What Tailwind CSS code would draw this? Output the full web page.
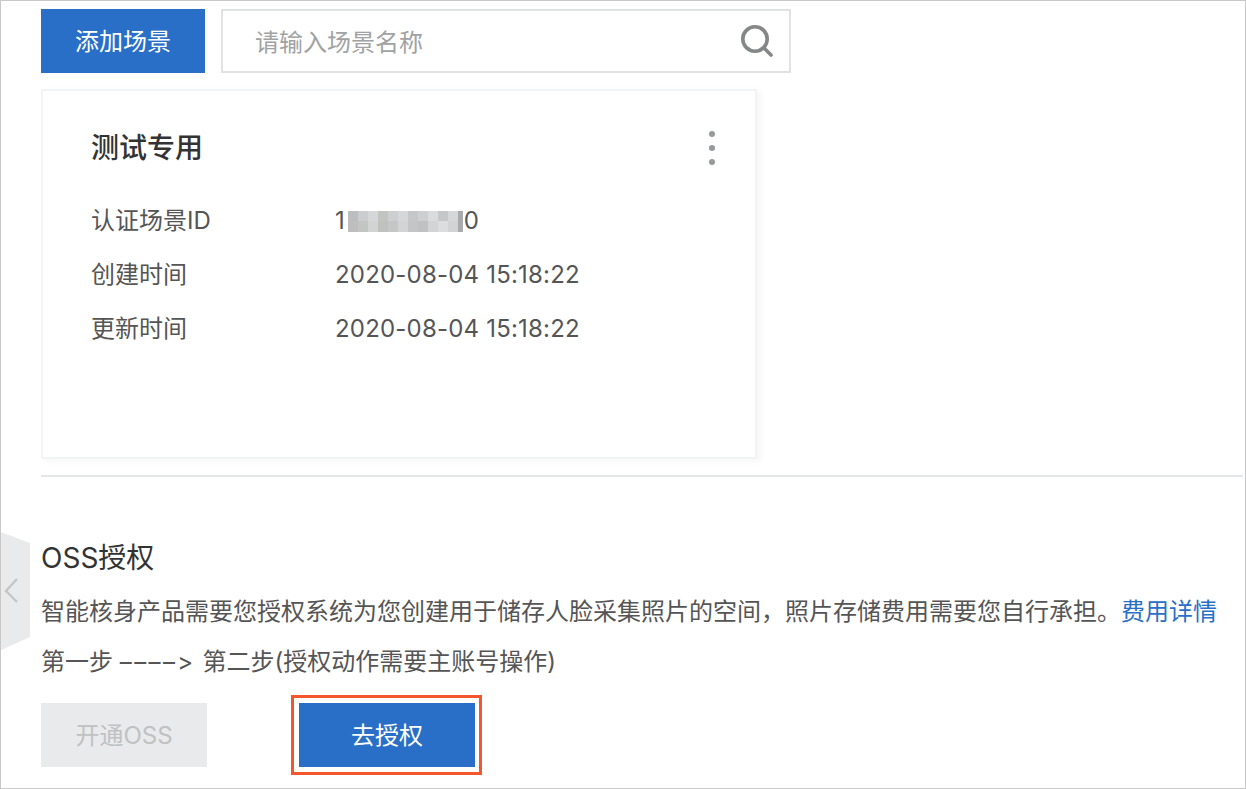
<!DOCTYPE html>
<html lang="zh-CN">
<head>
<meta charset="utf-8">
<title>OSS授权</title>
<script src="https://cdn.jsdelivr.net/npm/@tailwindcss/browser@4"></script>
</head>
<body class="bg-white">
<div class="relative h-[789px] w-[1246px] overflow-hidden border border-[#c8c8c8] bg-white pl-10 pr-[2px] pt-2 font-['Inter','Noto_Sans_CJK_SC',sans-serif] text-[24px] text-[#555] [font-feature-settings:'calt'_0]">

  <!-- Toolbar -->
  <div class="flex gap-4">
    <button class="h-16 w-[164px] bg-[#2a6fc7] pt-[1px] text-white">添加场景</button>
    <div class="flex h-16 w-[570px] items-center justify-between border-2 border-[#e0e2e3] pl-[32px] pr-[16px]">
      <span class="pt-[4px] text-[#a0a2a4]">请输入场景名称</span>
      <svg class="h-8 w-8" viewBox="0 0 32 32" fill="none" stroke="#848687" stroke-width="3.6" stroke-linecap="round"><circle cx="14" cy="14" r="12.2"/><path d="M23 23l7 7"/></svg>
    </div>
  </div>

  <!-- Scene card -->
  <div class="mt-4 h-[370px] w-[716px] border-2 border-[#f2f3f4] pl-[48px] pr-[40px] pt-[37px] shadow-[4px_2px_6px_rgba(0,0,0,0.04)]">
    <div class="flex items-center justify-between">
      <h3 class="text-[28px] leading-[40px] font-medium text-[#333]">测试专用</h3>
      <div class="flex flex-col gap-2">
        <span class="h-[6px] w-[6px] rounded-full bg-[#98999b]"></span>
        <span class="h-[6px] w-[6px] rounded-full bg-[#98999b]"></span>
        <span class="h-[6px] w-[6px] rounded-full bg-[#98999b]"></span>
      </div>
    </div>
    <dl class="mt-[35px] grid grid-cols-[244px_1fr] gap-y-[18px] leading-[36px]">
      <dt>认证场景ID</dt>
      <dd class="flex items-center">
        <span>1</span>
        <span class="ml-[3px] mr-[1px] grid h-[21px] w-[115px] grid-cols-[repeat(11,10px)_5px] grid-rows-2">
          <i class="bg-[#bcbdbe]"></i><i class="bg-[#cbcccd]"></i><i class="bg-[#d6d7d8]"></i><i class="bg-[#c2c4c2]"></i><i class="bg-[#cdcecf]"></i><i class="bg-[#d6d7d9]"></i><i class="bg-[#c6c7c9]"></i><i class="bg-[#cecfd1]"></i><i class="bg-[#dadbdc]"></i><i class="bg-[#c6c7c9]"></i><i class="bg-[#d6d7d8]"></i><i class="bg-[#a9aaab]"></i>
          <i class="bg-[#bdbebd]"></i><i class="bg-[#c3c5c3]"></i><i class="bg-[#d2d3d3]"></i><i class="bg-[#bfc1bf]"></i><i class="bg-[#c5c7c6]"></i><i class="bg-[#d3d4d5]"></i><i class="bg-[#c4c5c7]"></i><i class="bg-[#c0c1c3]"></i><i class="bg-[#d3d4d5]"></i><i class="bg-[#dcdddf]"></i><i class="bg-[#d2d3d4]"></i><i class="bg-[#a9aaab]"></i>
        </span>
        <span>0</span>
      </dd>
      <dt>创建时间</dt>
      <dd class="tracking-[0.2px]">2020-08-04 15:18:22</dd>
      <dt>更新时间</dt>
      <dd class="tracking-[0.2px]">2020-08-04 15:18:22</dd>
    </dl>
  </div>

  <hr class="mt-[16px] border-t-2 border-[#e5e6e7]">

  <!-- OSS authorization -->
  <section class="pt-[62px]">
    <h2 class="text-[28px] leading-[38px] text-[#333]">OSS授权</h2>
    <p class="mt-[18px] leading-[34px] whitespace-nowrap">智能核身产品需要您授权系统为您创建用于储存人脸采集照片的空间，照片存储费用需要您自行承担。<a href="#" class="text-[#2a6fc7]">费用详情</a></p>
    <p class="mt-[16px] leading-[34px]">第一步 <span class="tracking-[2.4px]">––––&gt;</span> 第二步(授权动作需要主账号操作)</p>
    <div class="mt-[16px] flex items-center">
      <button class="h-16 w-[166px] bg-[#e9eaec] pt-[1px] text-[#bfc1c3]">开通OSS</button>
      <div class="ml-[84px] border-[3px] border-[#f4562e] py-[5px] pl-[5px] pr-[4px]">
        <button class="block h-16 w-[176px] bg-[#2a6fc7] pt-[2px] text-white">去授权</button>
      </div>
    </div>
  </section>

  <!-- Sidebar toggle -->
  <div class="absolute left-0 top-[531px]">
    <svg class="block h-[118px] w-[29px]" viewBox="0 0 29 118"><path d="M0 0L29 11V105L0 118Z" fill="#e9eaec"/><path d="M16 47L5 59L16 70" fill="none" stroke="#c4c6c8" stroke-width="2.4"/></svg>
  </div>
</div>
</body>
</html>
